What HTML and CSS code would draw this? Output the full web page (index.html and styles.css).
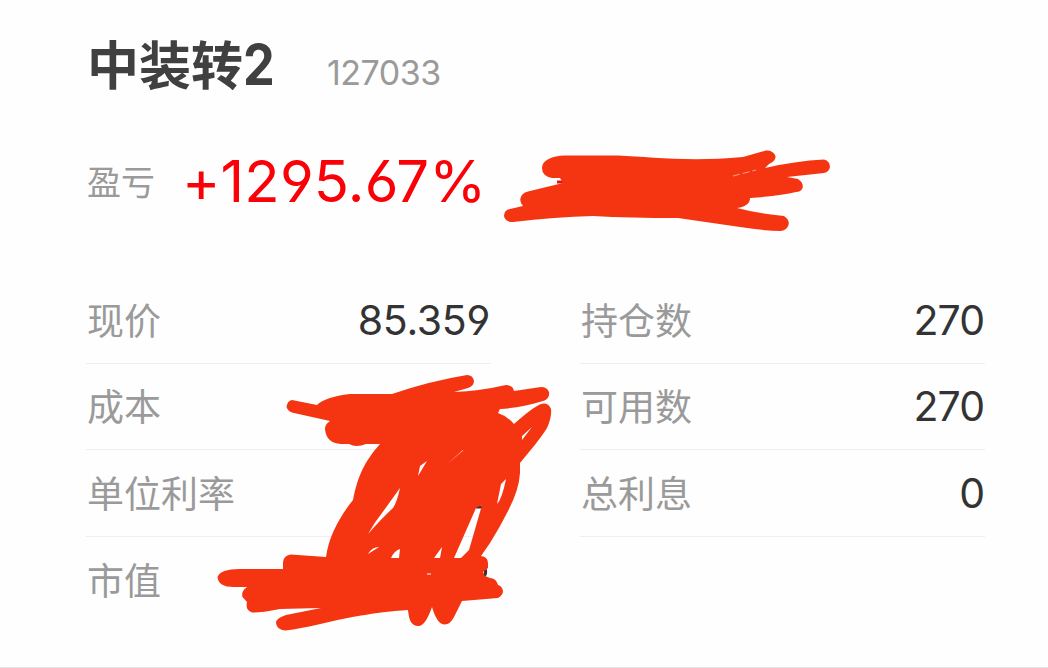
FILE: index.html
```html
<!DOCTYPE html>
<html lang="zh-CN">
<head>
  <meta charset="UTF-8" />
  <title>中装转2</title>
  <link rel="stylesheet" href="styles.css">
</head>
<body>

  <div class="title">
    <h2>中装转<span class="num">2</span></h2>
    <span class="code">127033</span>
  </div>

  <div class="profit">
    <span class="profit-label">盈亏</span>
    <span class="profit-value">+1295.67%</span>
  </div>

  <div class="details">
    <div class="column">
      <div class="row"><span>现价</span><span class="value">85.359</span></div>
      <div class="row"><span>成本</span></div>
      <div class="row"><span>单位利率</span></div>
      <div class="row"><span>市值</span></div>
    </div>
    <div class="column">
      <div class="row"><span>持仓数</span><span class="value amount">270</span></div>
      <div class="row"><span>可用数</span><span class="value amount">270</span></div>
      <div class="row"><span>总利息</span><span class="value amount">0</span></div>
    </div>
  </div>

  <!-- marker strokes over the private numbers -->
  <svg class="marker" width="1048" height="668" viewBox="0 0 1048 668">
    <path class="minus" d="M557 182H575"/>
    <path class="ink" d="M542 168C542 160 552 156 565 155.500H618C650 157 690 162 743 157L766 150.500Q773 150 775.500 156Q776 161 769 164L765 168Q795 161 824 159.500Q830 161 830 167Q829 172 824 173L787 177L798 179Q804 183 802.500 188Q801 192 796 192Q780 196 750 198Q750 206 737 208Q760 214 784 216Q790 220 788.500 225Q787 230 781 231Q766 231 740 227L678 218Q630 218 593 216Q555 217 513 222Q505 222 504 216Q504 210 510 209L523 206Q518 200 522 195Q524 192 530 191L563 183L560 178H552Q542 176 542 168Z"/>
    <path class="scratch" d="M733 176L756 170"/>
    <path class="dark" d="M476 507H483M484.500 568Q487 573 484 576"/>
    <path class="ink" fill-rule="evenodd" d="M292 400Q287 401 286.500 407Q288 412 294 413L330 421Q325 424 325 429Q326 443 341 444H349Q356 448 366 444H380C365 461 358 475 353 500C341 515 329 535 326 557L291 554.500Q284 555 283 562V569H240Q220 569 217.500 577Q218 587 234 587H247Q241 591 242.500 597L247 602Q245 610 252 612.500Q260 613 280 609L321 608L286 615Q276 618 276 623Q277 630 285 630.500C310 628 345 617 365 615Q380 612 408 610C409 621 412 626 418 626Q425 627 432 607Q437 624 444 624.500Q450 625 454 617L462 601L498 598Q503 595 503 591Q502 586 498 585Q496 578 490 578L485 576L483 572L488 568L488 563Q488 557 481 556L490 543Q500 527 508 511Q519 490 520 473V463C530 451 540 439 547 428Q552 417 551 409Q548 402 541 404Q533 407 514 424Q507 416 498 413L500 409Q520 408 543 401Q550 399 549 392Q547 387 541 387L514 391Q513 385 506 385Q480 391 454 392L468 388Q474 386 474 381Q473 375 467 375Q430 381 392 394H350Q325 397 317 405Z
      M420 466L427 461L418 476Z M446.500 464.500L463 450L463.200 450.500Z
      M400 488Q397 502 393 508Q382 518 368 534Q374 523 382 513Z
      M368 554Q372 547 379 547Z M391 558Q394 551 400 549L399 558Z
      M442 547L440 558H434Z M476 508L454 558H461L469 550Q474 533 482 505Z
      M506 479L501 484L497 504Q502 499 506 479Z M522 436L532 427L522 440Z M427 573.500H431V574.500H427Z"/>
  </svg>

</body>
</html>
```
FILE: styles.css
```css
body {
  font-family: Inter, "Noto Sans CJK SC", sans-serif;
  font-feature-settings: "cv03", "cv04";
  background: #fefefe;
  color: #9a9a9a;
  height: 668px;
  margin: 0;
  padding: 33px 63px 0 87px;
  box-sizing: border-box;
  border-bottom: 1px solid #e6e6e6;
  overflow: hidden;
}
.title {
  display: flex;
  align-items: baseline;
  height: 64px;
  line-height: 64px;
}
h2 {
  color: #404040;
  font-size: 52px;
  font-weight: bold;
  width: 240px;
  margin: 0;
}
.num {
  display: inline-block;
  font-size: 56px;
  transform: scaleX(0.9);
  transform-origin: left;
}
.code {
  font-size: 34px;
  letter-spacing: -0.5px;
}
.profit {
  display: flex;
  align-items: center;
  height: 70px;
  margin-top: 48px;
}
.profit-label {
  font-size: 34px;
  width: 95px;
}
.profit-value {
  color: #fb0007;
  font-size: 58px;
  letter-spacing: 0.2px;
  padding-top: 2px;
}
.details {
  display: flex;
  gap: 89px;
  margin-left: -1px;
  margin-top: 62px;
}
.column {
  width: 405px;
}
.row {
  display: flex;
  align-items: center;
  justify-content: space-between;
  height: 86.600px;
  padding: 0 1px 2px;
  box-sizing: border-box;
  border-bottom: 1px solid #eee;
  font-size: 37px;
}
.row:nth-child(4) {
  border-bottom: none;
}
.value {
  color: #333;
  font-size: 41px;
  letter-spacing: -0.3px;
  padding-top: 2px;
}
.amount {
  letter-spacing: -1px;
}
.marker {
  position: absolute;
  top: 0;
  left: 0;
}
.ink {
  fill: #f53511;
}
.minus, .dark, .scratch {
  fill: none;
  stroke: #f10d20;
  stroke-width: 3;
}
.dark {
  stroke: #333;
}
.scratch {
  stroke: #f9a18f;
  stroke-width: 1;
  stroke-dasharray: 7 3;
}
```
